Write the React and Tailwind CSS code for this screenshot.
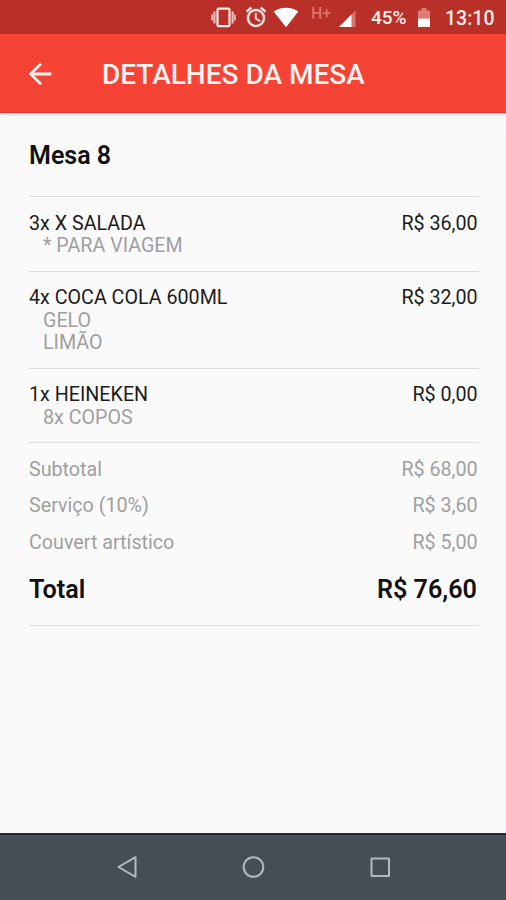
const items = [
  { name: '3x X SALADA', price: 'R$ 36,00', notes: ['* PARA VIAGEM'], box: 'h-[75px] pt-[15.6px]' },
  { name: '4x COCA COLA 600ML', price: 'R$ 32,00', notes: ['GELO', 'LIMÃO'], box: 'h-[97px] pt-[15px]' },
  { name: '1x HEINEKEN', price: 'R$ 0,00', notes: ['8x COPOS'], box: 'h-[74px] pt-[15px]' },
];

const fees = [
  { label: 'Subtotal', value: 'R$ 68,00' },
  { label: 'Serviço (10%)', value: 'R$ 3,60' },
  { label: 'Couvert artístico', value: 'R$ 5,00' },
];

function StatusBar() {
  return (
    <div className="flex h-[34px] items-center bg-[#b93029] pl-[211px] text-[19.5px] font-medium text-[#ffece8]">
      {/* Vibrate */}
      <svg className="h-[24px] w-[26px] shrink-0" viewBox="0 0 26 24" fill="none" stroke="currentColor">
        <rect x="6.5" y="3.6" width="12" height="17.6" rx="1.2" strokeWidth="2.2" />
        <path d="M3.4 6.5v12M21.6 6.5v12" strokeWidth="2.2" opacity="0.75" />
        <path d="M1.1 9.5v6M23.9 9.5v6" strokeWidth="1.8" opacity="0.7" />
      </svg>
      {/* Alarm */}
      <svg className="ml-[7px] h-[24px] w-[24px] shrink-0" viewBox="0 0 24 24" fill="currentColor" stroke="currentColor" strokeWidth="0.4">
        <path d="M22 5.72l-4.6-3.86-1.29 1.53 4.6 3.86L22 5.72zM7.88 3.39L6.6 1.86 2 5.71l1.29 1.53 4.59-3.85zM12.5 8H11v6l4.75 2.85.75-1.23-4-2.37V8zM12 4c-4.97 0-9 4.03-9 9s4.02 9 9 9a9 9 0 0 0 0-18zm0 16c-3.87 0-7-3.13-7-7s3.13-7 7-7 7 3.13 7 7-3.13 7-7 7z" />
      </svg>
      {/* Wi-Fi */}
      <svg className="ml-[5px] h-[24px] w-[26px] shrink-0" viewBox="0 0 26 24" fill="#fff">
        <path d="M.7 6.5C4 4.1 8.2 2.7 13 2.7s9 1.4 12.3 3.8L13.8 21.3q-.8 1-1.600 0z" />
      </svg>
      <span className="ml-[12px] w-[23px] self-start pt-[4px] text-[16px] leading-[20px] text-[#d9716b]">H+</span>
      {/* Mobile signal */}
      <svg className="mt-[4px] ml-[4px] h-[18px] w-[20px] shrink-0" viewBox="0 0 20 18">
        <path d="M1 17L17.500 0.500V17z" fill="#d9736c" />
        <path d="M1 17L13.500 4.500V17z" fill="#fff" />
      </svg>
      <span className="mt-[3px] ml-[13px] w-[40px] text-[19px]">45%</span>
      {/* Battery */}
      <svg className="mt-[2px] ml-[6px] h-[22px] w-[14px] shrink-0" viewBox="0 0 14 22">
        <path d="M4.500 1h5v2.500H13v8H1v-8h3.500z" fill="#dc7a74" />
        <path d="M1 11.500h12V20H1z" fill="#fff" />
      </svg>
      <span className="mt-[3px] ml-[14px]">13:10</span>
    </div>
  );
}

function AppBar() {
  return (
    <header className="z-10 flex h-[79px] items-center border-b border-[#d63a30] bg-[#f54336] pl-[23px] text-[#fff1ee] shadow-[0_1px_3px_rgba(0,0,0,0.25)]">
      <svg className="mt-[1px] h-[34px] w-[34px]" viewBox="0 0 24 24" fill="currentColor">
        <path d="M20 11H7.830l5.590-5.590L12 4l-8 8 8 8 1.410-1.410L7.830 13H20v-2z" />
      </svg>
      <h1 className="mt-[4px] ml-[45px] text-[28px] leading-[34px] font-medium">DETALHES DA MESA</h1>
    </header>
  );
}

function Item({ item }) {
  return (
    <li className={`flex justify-between border-b border-[#dedede] text-[19.7px] leading-[22.5px] ${item.box}`}>
      <div>
        <p>{item.name}</p>
        {item.notes.map(note => (
          <p key={note} className="pl-[14px] text-[#a0a0a0]">{note}</p>
        ))}
      </div>
      <p className="pr-[1.4px]">{item.price}</p>
    </li>
  );
}

function NavBar() {
  return (
    <nav className="flex h-[67px] items-center border-t-2 border-[#1f2930] bg-[#464d55] pb-[2px] pl-[115px] text-[#b4b9bd]">
      <svg className="h-[24px] w-[24px]" viewBox="0 0 24 24" fill="none" stroke="currentColor" strokeWidth="2" strokeLinejoin="round">
        <path d="M20.500 2.200v19.600L3.500 12z" />
      </svg>
      <svg className="ml-[102px] h-[24px] w-[24px]" viewBox="0 0 24 24" fill="none" stroke="currentColor" strokeWidth="2">
        <circle cx="12.500" cy="12" r="9.800" />
      </svg>
      <svg className="ml-[103px] h-[24px] w-[24px]" viewBox="0 0 24 24" fill="none" stroke="currentColor" strokeWidth="2">
        <rect x="3.500" y="3.500" width="17.500" height="17.500" rx="0.500" />
      </svg>
    </nav>
  );
}

export default function App() {
  return (
    <div className="flex h-[900px] w-[506px] flex-col overflow-hidden bg-[#fafafa] font-[Roboto,sans-serif] text-[#1c1c1c]">
      <StatusBar />
      <AppBar />
      <main className="flex-1 pr-[27px] pl-[29px]">
        <h2 className="h-[84px] border-b border-[#dedede] pt-[28px] text-[25px] leading-[30px] font-semibold text-[#111]">Mesa 8</h2>
        <ul>
          {items.map(item => <Item key={item.name} item={item} />)}
        </ul>
        <div className="flex h-[183px] flex-col border-b border-[#dedede] pt-[8px]">
          {fees.map(fee => (
            <div key={fee.label} className="flex h-[36.7px] items-center justify-between text-[19.7px] text-[#a0a0a0]">
              <span>{fee.label}</span>
              <span className="pr-[1.4px]">{fee.value}</span>
            </div>
          ))}
          <div className="mt-[14px] flex items-center justify-between text-[25.2px] leading-[30px] font-semibold text-[#111]">
            <span>Total</span>
            <span className="pr-[2px]">R$ 76,60</span>
          </div>
        </div>
      </main>
      <NavBar />
    </div>
  );
}
